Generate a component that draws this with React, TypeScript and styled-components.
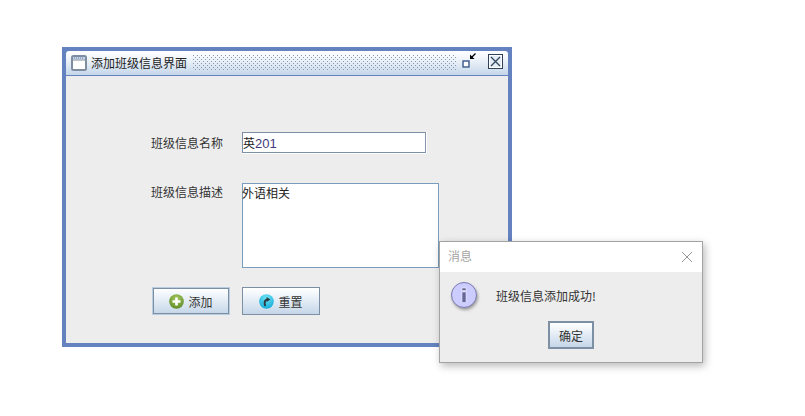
import React from 'react';
import styled, { createGlobalStyle } from 'styled-components';

const Global = createGlobalStyle`
  html, body { margin: 0; padding: 0; background: #fff; }
  body { font-family: "Noto Sans CJK SC", "Liberation Sans", sans-serif; font-size: 12px; color: #333; }
`;

const Page = styled.div`
  position: relative;
  width: 805px;
  height: 416px;
  padding: 47px 0 0 62px;
  box-sizing: border-box;
  overflow: hidden;
`;

const Frame = styled.div`
  width: 450px;
  height: 300px;
  box-sizing: border-box;
  border: 4px solid #6382bf;
  background: #6382bf;
  display: flex;
  flex-direction: column;
`;

const TitleBar = styled.div`
  height: 25px;
  box-sizing: border-box;
  flex: none;
  border-bottom: 1px solid #6382bf;
  border-radius: 3px 3px 0 0;
  background: linear-gradient(#ffffff 0%, #f2f6fb 30%, #c4d6ea 100%);
  display: flex;
  align-items: center;
  padding: 0 5px;
`;

const WinIcon = styled.svg`
  width: 16px;
  height: 16px;
  flex: none;
  margin-right: 4px;
`;

const TitleText = styled.span`
  font-size: 12px;
  line-height: 16px;
  color: #222;
  white-space: nowrap;
  margin-right: 6px;
`;

const Dots = styled.div`
  flex: 1;
  height: 16px;
  margin-right: 5px;
  background-image:
    radial-gradient(circle at 0.5px 0.5px, #8496b0 0.6px, transparent 0.75px),
    radial-gradient(circle at 2.5px 2.5px, #8496b0 0.6px, transparent 0.75px);
  background-size: 4px 4px;
`;

const CtrlIcon = styled.svg<{ $gap?: number; $lift: number }>`
  flex: none;
  margin-left: ${p => p.$gap ?? 0}px;
  margin-bottom: ${p => p.$lift}px;
`;

const Form = styled.div`
  flex: 1;
  background: #ededed;
  padding: 56px 0 0 85px;
  display: flex;
  flex-direction: column;
`;

const Row = styled.div<{ $top?: number }>`
  display: flex;
  margin-top: ${p => p.$top ?? 0}px;
`;

const Label = styled.label<{ $h: number }>`
  width: 91px;
  flex: none;
  font-size: 12px;
  line-height: ${p => p.$h}px;
  color: #333;
  white-space: nowrap;
`;

const TextField = styled.div`
  width: 184px;
  height: 21px;
  box-sizing: border-box;
  background: #fff;
  border: 1px solid #7c8fa5;
  border-right-color: #8496aa;
  box-shadow: 0 1px 0 #fff, 1px 0 0 #fff;
  font-size: 12px;
  line-height: 19px;
  color: #222;
  white-space: nowrap;
`;

const Ascii = styled.span`
  color: #3d3a7a;
  font-family: "Liberation Sans", sans-serif;
  font-size: 13px;
`;

const TextArea = styled.div`
  width: 197px;
  height: 85px;
  box-sizing: border-box;
  background: #fff;
  border: 1px solid #7a9cbd;
  font-size: 12px;
  line-height: 18px;
  text-indent: -1px;
  color: #222;
`;

const Buttons = styled.div`
  display: flex;
  gap: 12px;
  margin-top: 19px;
  margin-left: 1px;
`;

const Btn = styled.button<{ $focus?: boolean }>`
  width: 78px;
  height: 28px;
  box-sizing: border-box;
  padding: 0;
  margin: 0;
  border: ${p => (p.$focus ? '1px solid #b9cde0' : '1px solid #7d8fa3')};
  ${p => (p.$focus ? 'box-shadow: inset 0 0 0 1px #7d8fa3;' : '')}
  background: linear-gradient(#ffffff 0%, #f4f8fc 20%, #c5d6e8 100%);
  display: flex;
  align-items: center;
  justify-content: center;
  gap: 4px;
  font-family: inherit;
  font-size: 12px;
  color: #333;
`;

const BtnIcon = styled.svg`
  width: 15px;
  height: 15px;
  flex: none;
`;

const Dialog = styled.div`
  position: absolute;
  left: 439px;
  top: 241px;
  width: 264px;
  height: 122px;
  box-sizing: border-box;
  border: 1px solid #a3a3a3;
  background: #ededed;
  box-shadow: 2px 3px 8px rgba(0, 0, 0, 0.28);
  display: flex;
  flex-direction: column;
`;

const DialogHead = styled.div`
  height: 30px;
  flex: none;
  background: #fff;
  display: flex;
  align-items: center;
  justify-content: space-between;
  padding: 0 9px 0 8px;
`;

const DialogTitle = styled.span`
  font-size: 12px;
  color: #a4a4a4;
  margin-bottom: 4px;
`;

const DialogBody = styled.div`
  flex: 1;
  padding: 10px 0 0 11px;
  display: flex;
  flex-direction: column;
`;

const Message = styled.div`
  display: flex;
  align-items: center;
  gap: 19px;
  height: 26px;
  font-size: 12px;
  color: #333;
`;

const InfoIcon = styled.svg`
  width: 26px;
  height: 26px;
  flex: none;
  overflow: visible;
  filter: drop-shadow(1px 2px 1.5px rgba(0, 0, 0, 0.35));
`;

const OkRow = styled.div`
  display: flex;
  justify-content: center;
  margin-top: 13px;
  padding-right: 11px;
`;

const OkBtn = styled.button`
  width: 46px;
  height: 28px;
  box-sizing: border-box;
  padding: 0;
  border: 2px solid #7d8fa3;
  background: linear-gradient(#ffffff 0%, #f4f8fc 20%, #c5d6e8 100%);
  font-family: inherit;
  font-size: 12px;
  color: #333;
`;

export default function App() {
  return (
    <Page>
      <Global />
      <Frame>
        <TitleBar>
          <WinIcon viewBox="0 0 16 16">
            <rect x="1" y="1" width="14" height="14" rx="1.5" fill="#fff" stroke="#7f8da0" strokeWidth="2" />
            <rect x="2" y="2" width="12" height="2.5" fill="#c4d4e8" />
            <line x1="3" y1="3" x2="13" y2="3" stroke="#6f86a8" strokeWidth="1" strokeDasharray="1 1" />
            <line x1="2" y1="5" x2="14" y2="5" stroke="#7f8da0" strokeWidth="1" />
          </WinIcon>
          <TitleText>添加班级信息界面</TitleText>
          <Dots />
          <CtrlIcon $lift={5} width="14" height="15" viewBox="0 0 14 15">
            <rect x="0.5" y="7.5" width="7" height="7" fill="#fff" stroke="#fff" />
            <rect x="1" y="8" width="6" height="6" fill="#fff" stroke="#3f5f8f" strokeWidth="1.5" />
            <path d="M13.5 0.5 L9.5 4.5" stroke="#000" strokeWidth="1.2" />
            <path d="M8 1.5 V6 H12.5 Z" fill="#000" />
          </CtrlIcon>
          <CtrlIcon $gap={12} $lift={4} width="15" height="15" viewBox="0 0 15 15">
            <rect x="0.5" y="0.5" width="14" height="14" fill="#e4ecf5" stroke="#2f4058" />
            <rect x="1.5" y="1.5" width="12" height="12" fill="none" stroke="#fff" />
            <path d="M3 3 L12 12 M12 3 L3 12" stroke="#33465e" strokeWidth="1.3" />
          </CtrlIcon>
        </TitleBar>
        <Form>
          <Row>
            <Label $h={21}>班级信息名称</Label>
            <TextField>英<Ascii>201</Ascii></TextField>
          </Row>
          <Row $top={30}>
            <Label $h={18}>班级信息描述</Label>
            <TextArea>外语相关</TextArea>
          </Row>
          <Buttons>
            <Btn $focus>
              <BtnIcon viewBox="0 0 15 15">
                <defs>
                  <radialGradient id="addFill" cx="50%" cy="30%" r="75%">
                    <stop offset="0%" stopColor="#a6c85f" />
                    <stop offset="100%" stopColor="#5b8a24" />
                  </radialGradient>
                </defs>
                <circle cx="7.5" cy="7.5" r="7.3" fill="url(#addFill)" />
                <path d="M7.5 3.5 V11.5 M3.5 7.5 H11.5" stroke="#fff" strokeWidth="2.6" />
              </BtnIcon>
              添加
            </Btn>
            <Btn>
              <BtnIcon viewBox="0 0 15 15">
                <defs>
                  <radialGradient id="resetFill" cx="50%" cy="25%" r="80%">
                    <stop offset="0%" stopColor="#6fe4f6" />
                    <stop offset="100%" stopColor="#0fa9d6" />
                  </radialGradient>
                </defs>
                <circle cx="7.5" cy="7.5" r="7.3" fill="url(#resetFill)" />
                <path d="M6.2 12 C5 8.5 5.6 6 8.2 5.6" stroke="#2c3a40" strokeWidth="2" fill="none" />
                <path d="M7.6 3 L11.4 5.6 L7.6 8 Z" fill="#2c3a40" />
              </BtnIcon>
              重置
            </Btn>
          </Buttons>
        </Form>
      </Frame>
      <Dialog>
        <DialogHead>
          <DialogTitle>消息</DialogTitle>
          <svg width="12" height="12" viewBox="0 0 12 12">
            <path d="M1 1 L11 11 M11 1 L1 11" stroke="#8a8a8a" strokeWidth="0.9" />
          </svg>
        </DialogHead>
        <DialogBody>
          <Message>
            <InfoIcon viewBox="0 0 26 26">
              <circle cx="13" cy="13" r="12.5" fill="#ccccff" stroke="#7a7ab0" strokeWidth="1" />
              <rect x="11" y="10" width="4" height="10.5" fill="#66669a" stroke="#ffffff" strokeWidth="0.5" />
              <rect x="11" y="6" width="4" height="2.5" fill="#66669a" stroke="#ffffff" strokeWidth="0.5" />
            </InfoIcon>
            班级信息添加成功!
          </Message>
          <OkRow>
            <OkBtn>确定</OkBtn>
          </OkRow>
        </DialogBody>
      </Dialog>
    </Page>
  );
}
